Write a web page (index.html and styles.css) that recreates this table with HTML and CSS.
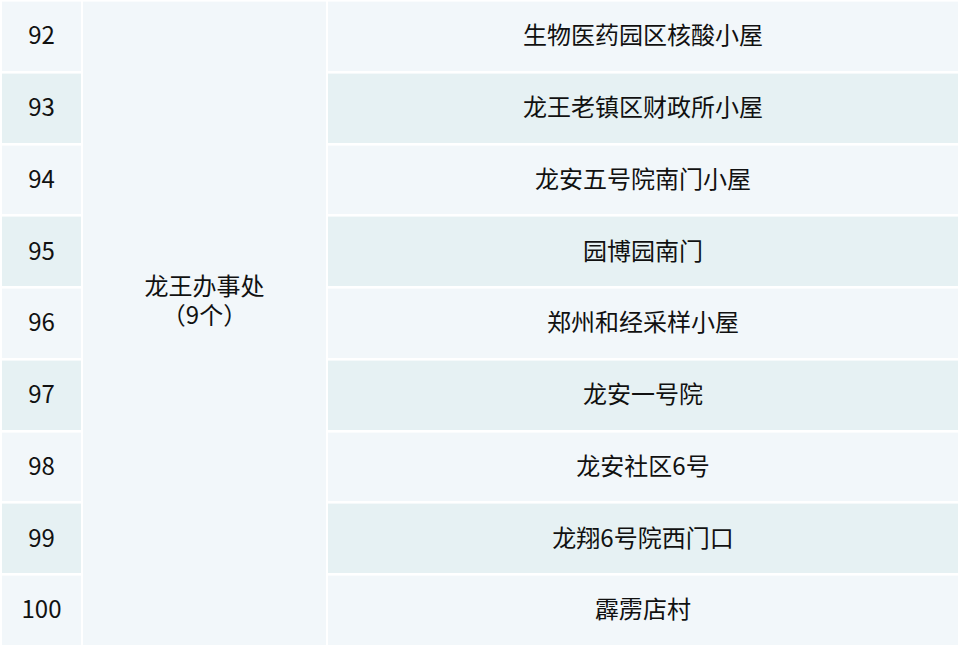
FILE: index.html
```html
<!DOCTYPE html>
<html lang="zh">
<head>
<meta charset="utf-8">
<link rel="stylesheet" href="styles.css">
</head>
<body>
<div class="table">
  <div class="cell num odd">92</div>
  <div class="cell office"><span class="line">龙王办事处</span><span class="line">（9个）</span></div>
  <div class="cell site odd">生物医药园区核酸小屋</div>
  <div class="cell num even">93</div>
  <div class="cell site even">龙王老镇区财政所小屋</div>
  <div class="cell num odd">94</div>
  <div class="cell site odd">龙安五号院南门小屋</div>
  <div class="cell num even">95</div>
  <div class="cell site even">园博园南门</div>
  <div class="cell num odd">96</div>
  <div class="cell site odd">郑州和经采样小屋</div>
  <div class="cell num even">97</div>
  <div class="cell site even">龙安一号院</div>
  <div class="cell num odd">98</div>
  <div class="cell site odd">龙安社区6号</div>
  <div class="cell num even">99</div>
  <div class="cell site even">龙翔6号院西门口</div>
  <div class="cell num odd">100</div>
  <div class="cell site odd">霹雳店村</div>
</div>
</body>
</html>
```
FILE: styles.css
```css
html, body {
  margin: 0;
  padding: 0;
  background: #ffffff;
}
body {
  width: 960px;
  height: 647px;
  overflow: hidden;
  font-family: "Microsoft YaHei", "Noto Sans CJK SC", "Noto Sans", sans-serif;
  font-size: 24px;
  color: #111111;
}
.table {
  display: grid;
  grid-template-columns: 79px 243px 630px;
  grid-template-rows: repeat(9, 69.75px);
  column-gap: 2px;
  row-gap: 2px;
  padding: 1px 2px 0 2px;
}
.cell {
  display: flex;
  align-items: center;
  justify-content: center;
  text-align: center;
  line-height: 30px;
  padding-bottom: 3px;
  box-sizing: border-box;
  box-shadow: inset 0 1px 0 rgba(255,255,255,0.6);
}
.odd { background: #f2f7fa; }
.even { background: #e6f1f3; }
.num { grid-column: 1; }
.site { grid-column: 3; }
.office {
  grid-column: 2;
  grid-row: 1 / span 9;
  flex-direction: column;
  background: #f2f7fa;
  padding-bottom: 48px;
}
.line {
  display: block;
  height: 29px;
  line-height: 29px;
}
```
